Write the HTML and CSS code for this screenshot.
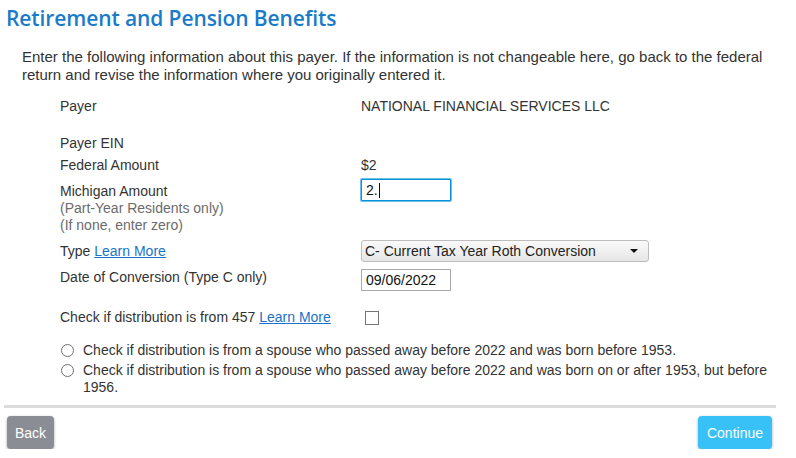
FILE: index.html
```html
<!DOCTYPE html>
<html>
<head>
<meta charset="utf-8">
<link rel="stylesheet" href="styles.css">
</head>
<body>
<div class="page">
  <h1 class="title">Retirement and Pension Benefits</h1>
  <p class="intro">Enter the following information about this payer. If the information is not changeable here, go back to the federal return and revise the information where you originally entered it.</p>
  <div class="form">
    <div class="row row-payer">
      <div class="label">Payer</div>
      <div class="value">NATIONAL FINANCIAL SERVICES LLC</div>
    </div>
    <div class="row row-ein">
      <div class="label">Payer EIN</div>
      <div class="value"></div>
    </div>
    <div class="row row-fed">
      <div class="label">Federal Amount</div>
      <div class="value">$2</div>
    </div>
    <div class="row row-mi">
      <div class="label">Michigan Amount<div class="sub">(Part-Year Residents only)</div><div class="sub">(If none, enter zero)</div></div>
      <div class="value"><div class="input focus">2.<span class="caret"></span></div></div>
    </div>
    <div class="row row-type">
      <div class="label">Type <a class="link" href="#">Learn More</a></div>
      <div class="value"><div class="select"><span>C- Current Tax Year Roth Conversion</span><span class="arrow"></span></div></div>
    </div>
    <div class="row row-date">
      <div class="label">Date of Conversion (Type C only)</div>
      <div class="value"><div class="input">09/06/2022</div></div>
    </div>
    <div class="row row-457">
      <div class="label">Check if distribution is from 457 <a class="link" href="#">Learn More</a></div>
      <div class="value"><span class="checkbox"></span></div>
    </div>
    <div class="radio-row r1">
      <span class="radio"></span>
      <span class="radio-text">Check if distribution is from a spouse who passed away before 2022 and was born before 1953.</span>
    </div>
    <div class="radio-row r2">
      <span class="radio"></span>
      <span class="radio-text">Check if distribution is from a spouse who passed away before 2022 and was born on or after 1953, but before 1956.</span>
    </div>
  </div>
  <div class="divider"></div>
  <div class="buttons">
    <button class="btn btn-back">Back</button>
    <button class="btn btn-continue">Continue</button>
  </div>
</div>
</body>
</html>
```

FILE: styles.css
```css
html, body {
  margin: 0;
  padding: 0;
  background: #ffffff;
}
.page {
  width: 796px;
  font-family: "Liberation Sans", Arial, sans-serif;
  font-size: 14px;
  color: #333333;
}
.title {
  margin: 0;
  padding: 5px 0 0 6px;
  font-family: "Open Sans", sans-serif;
  font-weight: 600;
  font-size: 21px;
  line-height: 26px;
  color: #1a7bc9;
  letter-spacing: -0.1px;
}
.intro {
  margin: 17px 0 0 0;
  padding: 0 22px 0 22px;
  font-size: 15px;
  line-height: 18px;
}
.form {
  padding-left: 60px;
  margin-top: 14px;
}
.row {
  display: grid;
  grid-template-columns: 301px 1fr;
  line-height: 17px;
}
.row-payer { min-height: 17px; }
.row-ein { margin-top: 20px; }
.row-fed { margin-top: 5px; }
.row-mi { margin-top: 9px; }
.row-type { margin-top: 6px; align-items: center; }
.row-date { margin-top: 7px; }
.row-457 { margin-top: 18px; align-items: center; }
.sub {
  color: #6b6b6b;
}
.link {
  color: #1a73c8;
  text-decoration: underline;
}
.input {
  box-sizing: border-box;
  width: 90px;
  height: 22px;
  border: 1px solid #a9a9a9;
  padding: 0 4px;
  line-height: 20px;
  color: #111;
  background: #fff;
}
.row-mi .value { margin-top: -4px; }
.input.focus {
  border: 1px solid #0b8fd6;
  box-shadow: 0 0 0 1px #6cc0ec;
  border-radius: 1px;
}
.caret {
  display: inline-block;
  width: 1px;
  height: 15px;
  background: #111;
  vertical-align: -3px;
  margin-left: 1px;
}
.select {
  box-sizing: border-box;
  width: 288px;
  height: 22px;
  border: 1px solid #bdbdbd;
  border-radius: 3px;
  background: linear-gradient(#fafafa, #e6e6e6);
  display: flex;
  align-items: center;
  justify-content: space-between;
  padding: 0 10px 0 3px;
  color: #222;
}
.arrow {
  width: 0;
  height: 0;
  border-left: 4px solid transparent;
  border-right: 4px solid transparent;
  border-top: 4px solid #111;
}
.checkbox {
  display: block;
  box-sizing: border-box;
  width: 14px;
  height: 14px;
  border: 1px solid #767676;
  margin-left: 4px;
  margin-top: 1px;
  background: #fff;
}
.radio-row {
  display: flex;
  align-items: flex-start;
  line-height: 17px;
  padding-right: 24px;
}
.r1 { margin-top: 16px; }
.r2 { margin-top: 3px; }
.radio {
  flex: none;
  box-sizing: border-box;
  width: 13px;
  height: 13px;
  border: 1px solid #6f6f6f;
  border-radius: 50%;
  margin: 2px 9px 0 1px;
  background: #fff;
}
.divider {
  margin: 9px 20px 0 4px;
  height: 3px;
  background: #dcdcdc;
}
.buttons {
  display: flex;
  justify-content: space-between;
  padding: 8px 24px 0 7px;
}
.btn {
  height: 33px;
  border: none;
  border-radius: 4px;
  font-family: "Liberation Sans", Arial, sans-serif;
  font-size: 14px;
  color: #ffffff;
  box-shadow: 0 1px 3px rgba(0,0,0,0.35);
  padding: 0;
}
.btn-back {
  width: 47px;
  background: #8a8d94;
}
.btn-continue {
  width: 74px;
  background: #38c1f7;
}
```
